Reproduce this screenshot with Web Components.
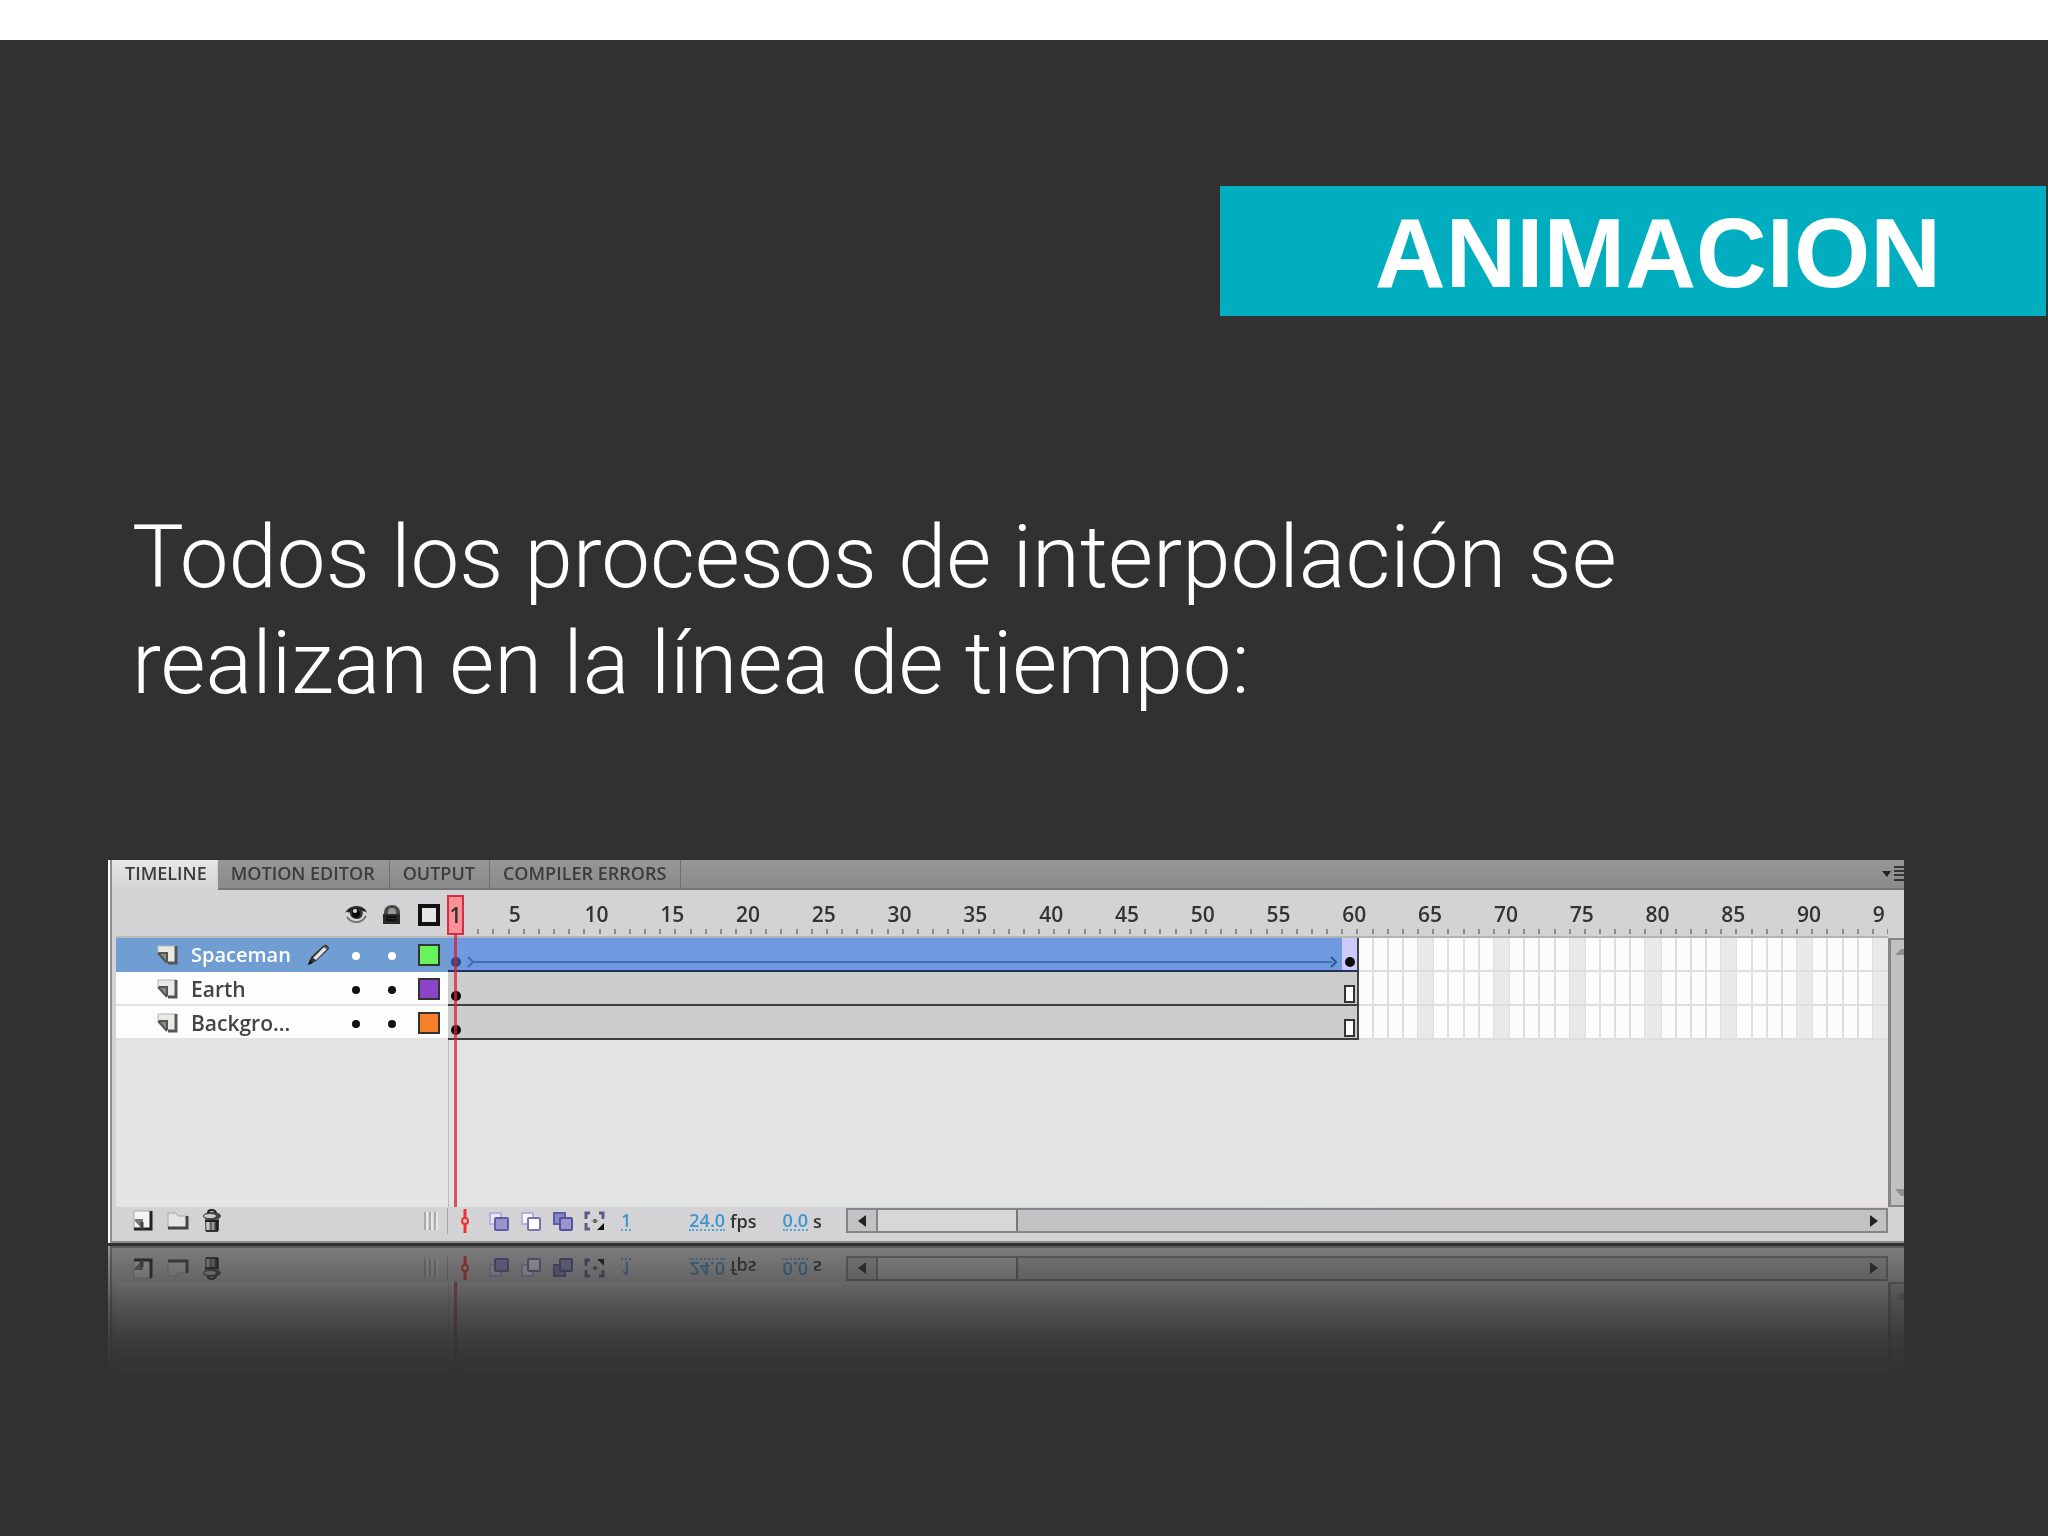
<!DOCTYPE html>
<html lang="es">
<head>
<meta charset="utf-8">
<meta name="viewport" content="width=device-width, initial-scale=1">
<title>Animacion</title>
<style>
    html, body {
        margin: 0;
        min-height: 100%;
        background: #323132;
    }
</style>
</head>
<body>
<slide-page>
    <slide-banner slot="title">ANIMACION</slide-banner>
    <slide-text>Todos los procesos de interpolación se realizan en la línea de tiempo:</slide-text>
    <timeline-panel>
        <timeline-layer name="Spaceman" color="#66f45c" selected></timeline-layer>
        <timeline-layer name="Earth" color="#8d45c7"></timeline-layer>
        <timeline-layer name="Backgro..." color="#f6812a"></timeline-layer>
        <frame-row slot="frames" tween></frame-row>
        <frame-row slot="frames"></frame-row>
        <frame-row slot="frames"></frame-row>
    </timeline-panel>
</slide-page>

<script>
// width, height and drawing of every glyph in the panel
const icons = {
  eye: [24, 20, `
    <path d="M1 8C4 2 9 1 13 1c5 0 9 3 10 7-2-2-4-3-5-3 2 4 0 9-5 9-5 0-8-4-7-8-2 0-4 1-5 2z" fill="#333"/>
    <path d="M3 12c4 6 14 8 19-1" fill="none" stroke="#777" stroke-width="2"/>
    <path d="M4 7c4-4 12-5 17-1" fill="none" stroke="#222" stroke-width="2"/>
    <circle cx="12" cy="9" r="4" fill="#080808"/><circle cx="11" cy="6" r="2" fill="#ddd"/>`],
  lock: [20, 22, `
    <path d="M2 20V9c0-5 3-8 8-8s8 3 8 8v11z" fill="#4b4b4b"/>
    <path d="M6 10V8c0-3 2-4 4-4s4 1 4 4v2z" fill="#999"/>
    <path d="M1 10h17v10H1z" fill="#292929"/><path d="M4 13h11M4 16h11" stroke="#111" stroke-width="2"/>`],
  layer: [22, 22, `
    <path d="M1 2h18v17h-7L1 9z" fill="#e9e9e6"/>
    <path d="M1 8h9v11z" fill="#8b8b88"/><path d="M1 9l9 10" stroke="#555" stroke-width="2"/>
    <path d="M10 18V9H2" fill="none" stroke="#555" stroke-width="2"/>
    <path d="M1 8V2h18" fill="none" stroke="#b5b5b2" stroke-width="1"/>
    <path d="M19 2v17h-8" fill="none" stroke="#555" stroke-width="3"/>`],
  pencil: [24, 24, `
    <path d="M1 22l3-8L17 2c2-1 5 1 5 4L9 18z" fill="#333"/>
    <path d="M6 15L17 4l3 2L9 17z" fill="#e4e4e4"/><path d="M1 22l2-5 3 3z" fill="#111"/>
    <path d="M17 3l4 3" stroke="#555" stroke-width="2"/>`],
  newLayer: [22, 22, `
    <path d="M2 1h17v18H2z" fill="#f4f4f4"/><path d="M2 10h8v9z" fill="#777"/>
    <path d="M10 18v-8H3" fill="none" stroke="#777" stroke-width="2"/>
    <path d="M2 19V1h17" fill="none" stroke="#aaa" stroke-width="1"/>
    <path d="M19 1v18H2" fill="none" stroke="#222" stroke-width="3"/><path d="M10 12v7" stroke="#444" stroke-width="3"/>`],
  folder: [24, 22, `
    <path d="M2 5V3h8l2 3h9v12H2z" fill="#e4e4e4"/>
    <path d="M2 18V3h8l2 3h8" fill="none" stroke="#aaa" stroke-width="1"/>
    <path d="M21 6v12H2" fill="none" stroke="#444" stroke-width="3"/>`],
  trash: [20, 24, `
    <path d="M3 9h14v13H3z" fill="#666"/><path d="M6 12v9" stroke="#ccc" stroke-width="3"/>
    <path d="M11 12v9" stroke="#999" stroke-width="2"/>
    <path d="M15 11v10" stroke="#222" stroke-width="3"/><path d="M4 22h12" stroke="#333" stroke-width="2"/>
    <path d="M3 12h14" stroke="#222" stroke-width="2"/>
    <ellipse cx="10" cy="7" rx="9" ry="4" fill="#444"/><ellipse cx="8" cy="7" rx="6" ry="2" fill="#ccc"/>
    <path d="M6 4c0-4 7-4 8 0" fill="none" stroke="#222" stroke-width="2"/>`],
  grip: [14, 22, `
    <path d="M1 2v18M6 2v18M11 2v18" stroke="#aaa" stroke-width="2"/><path d="M3 2v18M8 2v18M13 2v18" stroke="#fff" stroke-width="1"/>`],
  center: [10, 24, `
    <path d="M5 0v24" stroke="#f02f32" stroke-width="3"/><circle cx="5" cy="12" r="3" fill="#e6c8c8" stroke="#f02f32" stroke-width="2"/>`],
  onion: [22, 22, `
    <path d="M2 3h11v11H2z" fill="#e7e6f4" stroke="#b4b1dd" stroke-width="2"/>
    <rect x="7" y="8" width="13" height="12" rx="1" fill="#9896d0" stroke="#615da4" stroke-width="2"/>`],
  outlines: [22, 22, `
    <path d="M2 3h11v11H2z" fill="#f6f5fb" stroke="#b4b1dd" stroke-width="2"/>
    <rect x="8" y="8" width="12" height="12" rx="1" fill="#fff" stroke="#7773ae" stroke-width="2"/>`],
  multiple: [22, 22, `
    <path d="M2 3h11v11H2z" fill="#8885c4" stroke="#615da4" stroke-width="2"/>
    <rect x="8" y="8" width="12" height="12" rx="1" fill="#9896d0" stroke="#55519a" stroke-width="2"/>`],
  markers: [22, 22, `
    <path d="M6 3H2v6M2 13v6h4M15 3h4v6" fill="none" stroke="#5e5a86" stroke-width="3"/>
    <path d="M20 13v7h-7z" fill="#111"/><circle cx="11" cy="11" r="2" fill="#444"/><path d="M7 11h8" stroke="#999" stroke-width="1"/>`],
  menu: [22, 18, `
    <path d="M0 6h9l-4 6z" fill="#222"/><path d="M12 2h10M12 6h10M12 10h10M12 15h10" stroke="#333" stroke-width="2"/>`],
  left: [10, 14, `<path d="M9 1v12L1 7z" fill="#222"/>`],
  right: [10, 14, `<path d="M1 1v12l8-6z" fill="#222"/>`],
  up: [10, 10, `<path d="M1 8h9V2H7z" fill="#8f8f91"/>`],
  down: [10, 10, `<path d="M1 1h9v7H7z" fill="#8f8f91"/>`],
  tail: [8, 12, `<path d="M1 1l5 5-5 5" fill="none" stroke="#3f6fb3" stroke-width="2"/>`],
  head: [8, 12, `<path d="M1 1l5 5-5 5" fill="none" stroke="#2d5793" stroke-width="2"/>`]
};

class TimelineIcon extends HTMLElement {
  connectedCallback() {
    const [w, h, body] = icons[this.getAttribute('name')];
    this.attachShadow({mode: 'open'});
    this.shadowRoot.innerHTML = `
      <style>
          :host { display: block; flex: none; }
          svg { display: block; }
      </style>
      <svg width="${w}" height="${h}" viewBox="0 0 ${w} ${h}" aria-hidden="true">${body}</svg>`;
  }
}

class SlidePage extends HTMLElement {
  constructor() {
    super();
    this.attachShadow({mode: 'open'});
    this.shadowRoot.innerHTML = `
      <style>
          :host {
              display: flex;
              flex-direction: column;
              min-height: 100vh;
              box-sizing: border-box;
              border-top: 40px solid #fff;
              background: #323132;
              color: #fff;
          }
          header {
              display: flex;
              justify-content: flex-end;
              margin: 146px 2px 188px 0;
          }
          main {
              display: flex;
              flex-direction: column;
              gap: 144px;
              padding: 0 144px 150px 108px;
          }
      </style>
      <header><slot name="title"></slot></header>
      <main><slot></slot></main>`;
  }
}

class SlideBanner extends HTMLElement {
  constructor() {
    super();
    this.attachShadow({mode: 'open'});
    this.shadowRoot.innerHTML = `
      <style>
          :host {
              display: block;
              padding: 4px 105px 0 155px;
              background: #00aec0;
          }
          h1 {
              margin: 0;
              font: bold 98px/126px "Liberation Sans", Arial, sans-serif;
          }
      </style>
      <h1><slot></slot></h1>`;
  }
}

class SlideText extends HTMLElement {
  constructor() {
    super();
    this.attachShadow({mode: 'open'});
    this.shadowRoot.innerHTML = `
      <style>
          :host {
              display: block;
              max-width: 1600px;
              padding-left: 24px;
          }
          p {
              margin: 0;
              font: 300 87px/106px Roboto, "Liberation Sans", sans-serif;
          }
      </style>
      <p><slot></slot></p>`;
  }
}

class TimelineLayer extends HTMLElement {
  connectedCallback() {
    const name = this.getAttribute('name');
    const pencil = this.hasAttribute('selected') ? '<timeline-icon name="pencil"></timeline-icon>' : '';
    this.attachShadow({mode: 'open'});
    this.shadowRoot.innerHTML = `
      <style>
          :host {
              display: grid;
              grid-template-columns: 1fr 36px 36px 38px;
              align-items: center;
              box-sizing: border-box;
              height: 34px;
              padding-top: 1px;
              border-bottom: 2px solid #e2e2e3;
              background: #fdfdfd;
              color: #444;
              font-size: 21px;
              font-weight: 600;
          }
          :host([selected]) {
              background: #709ed2;
              border-color: #709ed2;
              color: #fff;
              font-size: 20px;
          }
          .name {
              display: flex;
              align-items: center;
              gap: 12px;
              padding: 0 7px 0 41px;
          }
          .name span { flex: 1; }
          button {
              display: grid;
              place-items: center;
              height: 100%;
              padding: 0;
              border: 0;
              background: none;
          }
          .dot::before {
              content: "";
              width: 8px;
              height: 8px;
              margin-top: 3px;
              border-radius: 50%;
              background: #111;
          }
          :host([selected]) .dot::before { background: #fff; }
          .swatch::before {
              content: "";
              width: 18px;
              height: 18px;
              border: 2px solid #333;
              background: ${this.getAttribute('color')};
          }
      </style>
      <div class="name"><timeline-icon name="layer"></timeline-icon><span>${name}</span>${pencil}</div>
      <button class="dot" aria-label="Show or hide ${name}"></button>
      <button class="dot" aria-label="Lock ${name}"></button>
      <button class="swatch" aria-label="Outline colour of ${name}"></button>`;
  }
}

class FrameRow extends HTMLElement {
  connectedCallback() {
    const tween = this.hasAttribute('tween');
    this.attachShadow({mode: 'open'});
    this.shadowRoot.innerHTML = `
      <style>
          :host {
              --line: #dedee0;
              display: grid;
              grid-template-columns: repeat(95, minmax(0, 1fr));
              height: 34px;
              background:
                  linear-gradient(var(--line), var(--line)) bottom / 100% 2px no-repeat,
                  repeating-linear-gradient(to right, transparent 0 calc(100% / 95 * 4), #e9e8ea 0 calc(100% / 95 * 5)),
                  repeating-linear-gradient(to right, var(--line) 0 1px, transparent 0 calc(100% / 95 - 1px), var(--line) 0 calc(100% / 95)),
                  #fcfbfd;
          }
          .span {
              grid-column: 1 / 61;
              display: flex;
              box-sizing: border-box;
              margin-right: -2px;
              border-right: 2px solid #444;
              border-bottom: 2px solid #3b3e3b;
              background: #cacdc9;
          }
          .key, .end {
              display: flex;
              flex: none;
              justify-content: center;
              align-items: flex-end;
              width: 15px;
              box-sizing: border-box;
              padding-bottom: 3px;
          }
          .key::before {
              content: "";
              width: 10px;
              height: 10px;
              border-radius: 50%;
              background: #0a0a0a;
          }
          .arrow {
              display: flex;
              flex: 1;
              align-items: center;
              height: 12px;
              align-self: flex-end;
              margin: 0 4px 2px;
          }
          .arrow i {
              flex: 1;
              height: 2px;
              margin: 0 -2px;
              background: #3f6fb3;
          }
          .end { margin-left: auto; padding-bottom: 1px; }
          .end::before {
              content: "";
              width: 7px;
              height: 14px;
              border: 2px solid #333;
              background: #fff;
          }
          :host([tween]) .span { background: #6f9ae0; border-bottom-color: #22305c; }
          :host([tween]) .first::before { background: #244b86; }
          :host([tween]) .last { background: #cccbfb; }
      </style>
      <div class="span">
          <div class="key first"></div>
          ${tween
            ? '<div class="arrow"><timeline-icon name="tail"></timeline-icon><i></i><timeline-icon name="head"></timeline-icon></div><div class="key last"></div>'
            : '<div class="end"></div>'}
      </div>`;
  }
}

class FrameRuler extends HTMLElement {
  connectedCallback() {
    let labels = '';
    for (let frame = 5; frame <= 95; frame += 5) {
      // the last number is cut by the edge of the view
      const text = frame === 95 ? '9' : frame;
      labels += `<span style="grid-column: ${frame}">${text}</span>`;
    }
    this.attachShadow({mode: 'open'});
    this.shadowRoot.innerHTML = `
      <style>
          :host {
              display: grid;
              grid-template-columns: repeat(95, minmax(0, 1fr));
              box-sizing: border-box;
              height: 48px;
              padding-top: 9px;
              border-bottom: 2px solid #b4b4b5;
              background:
                  repeating-linear-gradient(to right, transparent 0 calc(100% / 95 - 2px), #8d8d8f 0 calc(100% / 95)) 1px 39px / 100% 5px no-repeat;
          }
          span {
              font-size: 21px;
              font-weight: 600;
              line-height: 30px;
              white-space: nowrap;
              color: #333;
          }
      </style>
      ${labels}`;
  }
}

class TimelinePanel extends HTMLElement {
  constructor() {
    super();
    this.attachShadow({mode: 'open'});
    this.shadowRoot.innerHTML = `
      <style>
          :host {
              display: block;
              border-left: 2px solid #fff;
              font: 20px/30px "Open Sans", "Noto Sans", sans-serif;
              color: #333;
              -webkit-box-reflect: below 3px linear-gradient(
                  transparent calc(100% - 135px),
                  rgb(0 0 0 / 6%) calc(100% - 95px),
                  rgb(0 0 0 / 20%) calc(100% - 57px),
                  rgb(0 0 0 / 30%) calc(100% - 38px),
                  rgb(0 0 0 / 48%));
          }
          .panel {
              border-left: 2px solid #8e8e8e;
              background: #d3d2d4;
          }
          button {
              padding: 0;
              border: 0;
              background: none;
              font: inherit;
              color: inherit;
          }
          .tabs {
              display: flex;
              height: 30px;
              box-sizing: border-box;
              border-bottom: 2px solid #757476;
              background: linear-gradient(#989698, #8a898b);
          }
          .tabs button {
              padding: 0 14px 2px 13px;
              border-right: 1px solid #6f6f70;
              font-size: 18px;
              font-weight: 600;
              line-height: 26px;
              color: #3c3c3d;
          }
          .tabs .active {
              height: 30px;
              padding: 0 10px 4px 13px;
              border-right-color: #d3d2d4;
              background: linear-gradient(#e8e8e8, #d3d2d4);
          }
          .tabs .menu {
              margin-left: auto;
              padding: 0;
              border: 0;
          }
          .body {
              display: grid;
              grid-template-columns: 336px minmax(0, 1fr) 16px;
              min-height: 317px;
          }
          .layers, .frames {
              display: flex;
              flex-direction: column;
          }
          .layers { padding-left: 4px; }
          .columns {
              display: grid;
              grid-template-columns: 1fr 36px 36px 38px;
              place-items: center;
              box-sizing: border-box;
              height: 48px;
              padding-top: 4px;
              border-bottom: 2px solid #bcbcbd;
          }
          .columns > :first-child { grid-column: 2; }
          .outline {
              width: 22px;
              height: 22px;
              border: 4px solid #111;
              background: #e6e6e6;
          }
          .layers .rest {
              flex: 1;
              background: #e4e3e5;
          }
          .frames { position: relative; }
          .frames .rest {
              flex: 1;
              border-left: 1px solid #b9bbb9;
              background: linear-gradient(to right, #e1e4e2 55%, #e4e2e5 70%);
          }
          .playhead {
              position: absolute;
              top: 5px;
              bottom: 0;
              left: -1px;
              width: 17px;
          }
          .playhead b {
              display: block;
              height: 36px;
              border: 2px solid #cf3048;
              background: #fb9096;
              font-size: 21px;
              font-weight: 600;
              line-height: 36px;
              text-align: center;
          }
          .playhead i {
              display: block;
              width: 3px;
              height: calc(100% - 40px);
              margin: 0 auto;
              background: rgb(220 30 50 / 75%);
          }
          .vbar {
              display: flex;
              flex-direction: column;
              justify-content: space-between;
              align-items: flex-end;
              overflow: hidden;
              margin-top: 48px;
              padding: 7px 0;
              border: solid #868587;
              border-width: 2px 0 2px 3px;
              background: #c1c0c2;
          }
          footer {
              display: grid;
              grid-template-columns: 336px minmax(0, 1fr) 16px;
              height: 36px;
              box-sizing: border-box;
              border-bottom: 2px solid #8b8a8c;
          }
          .tools, .status {
              display: flex;
              align-items: center;
              height: 26px;
              margin-top: 1px;
          }
          .tools {
              gap: 12px;
              padding: 0 9px 0 20px;
              border-right: 1px solid #a3a3a3;
          }
          .tools .grip { margin-left: auto; }
          .status {
              font-size: 18px;
              line-height: 24px;
              font-weight: 600;
          }
          .onion {
              display: flex;
              align-items: center;
              gap: 10px;
              padding: 0 15px 0 12px;
          }
          .onion > :first-child { margin-right: 8px; }
          .hot {
              border-bottom: 2px dotted #55a5d3;
              line-height: 18px;
              color: #3d97cd;
          }
          .rate { margin-left: 58px; }
          .time { margin-left: 26px; }
          .unit { margin-left: 5px; }
          .hbar {
              display: flex;
              flex: 1;
              align-self: flex-start;
              height: 21px;
              margin-left: 24px;
              border: 2px solid #858486;
              background: #c2c1c3;
          }
          .hbar button {
              display: grid;
              place-items: center;
              width: 24px;
          }
          .hbar .back {
              width: 30px;
              border-right: 2px solid #858486;
          }
          input {
              flex: 1;
              min-width: 0;
              margin: 0;
              appearance: none;
              background: none;
          }
          input::-webkit-slider-thumb {
              appearance: none;
              width: 140px;
              height: 21px;
              border-right: 2px solid #777;
              background: #d7d7d7;
          }
      </style>
      <div class="panel">
          <div class="tabs">
              <button class="active">TIMELINE</button>
              <button>MOTION EDITOR</button>
              <button>OUTPUT</button>
              <button>COMPILER ERRORS</button>
              <button class="menu" aria-label="Panel menu"><timeline-icon name="menu"></timeline-icon></button>
          </div>
          <div class="body">
              <div class="layers">
                  <div class="columns">
                      <button aria-label="Show or hide all layers"><timeline-icon name="eye"></timeline-icon></button>
                      <button aria-label="Lock all layers"><timeline-icon name="lock"></timeline-icon></button>
                      <button class="outline" aria-label="Show all layers as outlines"></button>
                  </div>
                  <slot></slot>
                  <div class="rest"></div>
              </div>
              <div class="frames">
                  <frame-ruler></frame-ruler>
                  <slot name="frames"></slot>
                  <div class="rest"></div>
                  <div class="playhead"><b>1</b><i></i></div>
              </div>
              <div class="vbar"><timeline-icon name="up"></timeline-icon><timeline-icon name="down"></timeline-icon></div>
          </div>
          <footer>
              <div class="tools">
                  <button aria-label="New layer"><timeline-icon name="newLayer"></timeline-icon></button>
                  <button aria-label="New folder"><timeline-icon name="folder"></timeline-icon></button>
                  <button aria-label="Delete"><timeline-icon name="trash"></timeline-icon></button>
                  <timeline-icon class="grip" name="grip"></timeline-icon>
              </div>
              <div class="status">
                  <div class="onion">
                      <button aria-label="Center frame"><timeline-icon name="center"></timeline-icon></button>
                      <button aria-label="Onion skin"><timeline-icon name="onion"></timeline-icon></button>
                      <button aria-label="Onion skin outlines"><timeline-icon name="outlines"></timeline-icon></button>
                      <button aria-label="Edit multiple frames"><timeline-icon name="multiple"></timeline-icon></button>
                      <button aria-label="Modify onion markers"><timeline-icon name="markers"></timeline-icon></button>
                  </div>
                  <button class="hot">1</button>
                  <button class="hot rate">24.0</button><span class="unit">fps</span>
                  <button class="hot time">0.0</button><span class="unit">s</span>
                  <div class="hbar">
                      <button class="back" aria-label="Scroll left"><timeline-icon name="left"></timeline-icon></button>
                      <input type="range" value="0" aria-label="Scroll frames">
                      <button aria-label="Scroll right"><timeline-icon name="right"></timeline-icon></button>
                  </div>
              </div>
          </footer>
      </div>`;
  }
}

window.customElements.define('timeline-icon', TimelineIcon);
window.customElements.define('slide-page', SlidePage);
window.customElements.define('slide-banner', SlideBanner);
window.customElements.define('slide-text', SlideText);
window.customElements.define('timeline-layer', TimelineLayer);
window.customElements.define('frame-row', FrameRow);
window.customElements.define('frame-ruler', FrameRuler);
window.customElements.define('timeline-panel', TimelinePanel);
</script>
</body>
</html>
